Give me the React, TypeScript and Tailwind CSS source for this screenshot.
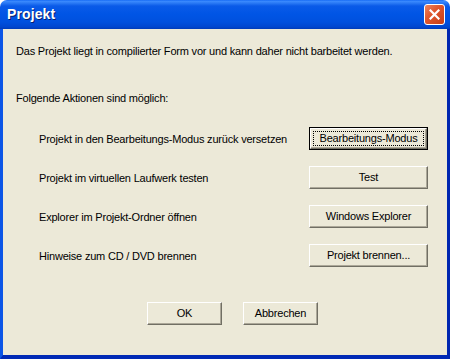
import React from 'react'

const font = { fontFamily: '"Liberation Sans", Arial, sans-serif' }

function XpButton({ label, isDefault = false, width = 'w-[119px]' }: { label: string; isDefault?: boolean; width?: string }) {
  if (isDefault) {
    return (
      <div className={`${width} h-[23px] border border-black`}>
        <div className="h-full w-full border-t border-l border-white border-b border-r border-b-[#716f64] border-r-[#716f64] bg-[#ece9d8] shadow-[inset_-1px_-1px_0_#aca899] p-[2px]">
          <div className="h-full w-full flex items-center justify-center border border-dotted border-black text-[11px] text-black leading-none tracking-[-0.2px]">
            {label}
          </div>
        </div>
      </div>
    )
  }
  return (
    <div className={`${width} h-[23px] flex items-center justify-center border-t border-l border-white border-b border-r border-b-[#716f64] border-r-[#716f64] bg-[#ece9d8] shadow-[inset_-1px_-1px_0_#aca899] text-[11px] text-black leading-none tracking-[-0.2px]`}>
      {label}
    </div>
  )
}

const actions = [
  { text: 'Projekt in den Bearbeitungs-Modus zurück versetzen', button: 'Bearbeitungs-Modus', isDefault: true },
  { text: 'Projekt im virtuellen Laufwerk testen', button: 'Test' },
  { text: 'Explorer im Projekt-Ordner öffnen', button: 'Windows Explorer' },
  { text: 'Hinweise zum CD / DVD brennen', button: 'Projekt brennen...' },
]

export default function App() {
  return (
    <div className="w-[450px] h-[359px] flex flex-col overflow-hidden" style={font}>
      {/* Title bar */}
      <div className="h-[29px] flex items-center justify-between pl-[7px] pr-[5px] rounded-t-[7px] bg-[linear-gradient(to_bottom,#0a5ff0_0px,#3d8cff_1px,#2b7af5_3px,#0a5ae8_6px,#0055e5_14px,#0050de_22px,#0046cf_27px,#003bb8_29px)]">
        <span className="text-white font-bold text-[14px] tracking-[0.1px] [text-shadow:1px_1px_0_#0a1e6e]">Projekt</span>
        <div className="w-[21px] h-[21px] rounded-[3px] border border-white bg-[linear-gradient(135deg,#ec8560,#e0582f_40%,#c73d15)] flex items-center justify-center">
          <svg width="11" height="11" viewBox="0 0 11 11">
            <path d="M1.5 1.5 L9.5 9.5 M9.5 1.5 L1.5 9.5" stroke="white" strokeWidth="2.2" strokeLinecap="square" />
          </svg>
        </div>
      </div>

      {/* Window body with frame */}
      <div className="flex-1 flex border-l-[3px] border-r-[3px] border-b-[4px] border-l-[#0b55e6] border-r-[#0026b0] border-b-[#0029b5]">
        <div className="flex-1 bg-[#ece9d8] flex flex-col text-[11px] text-black tracking-[-0.2px]">
          <p className="mt-[16px] ml-[13px] leading-[13px]">
            Das Projekt liegt in compilierter Form vor und kann daher nicht barbeitet werden.
          </p>
          <p className="mt-[34px] ml-[13px] leading-[13px]">Folgende Aktionen sind möglich:</p>

          <div className="mt-[22px] flex flex-col gap-[16px]">
            {actions.map((a) => (
              <div key={a.button} className="flex items-center h-[23px] pl-[36px]">
                <span className="w-[270px] leading-[13px] pt-[2px]">{a.text}</span>
                <XpButton label={a.button} isDefault={a.isDefault} />
              </div>
            ))}
          </div>

          <div className="mt-[35px] flex gap-[21px] ml-[144px]">
            <XpButton label="OK" width="w-[75px]" />
            <XpButton label="Abbrechen" width="w-[75px]" />
          </div>
        </div>
      </div>
    </div>
  )
}
